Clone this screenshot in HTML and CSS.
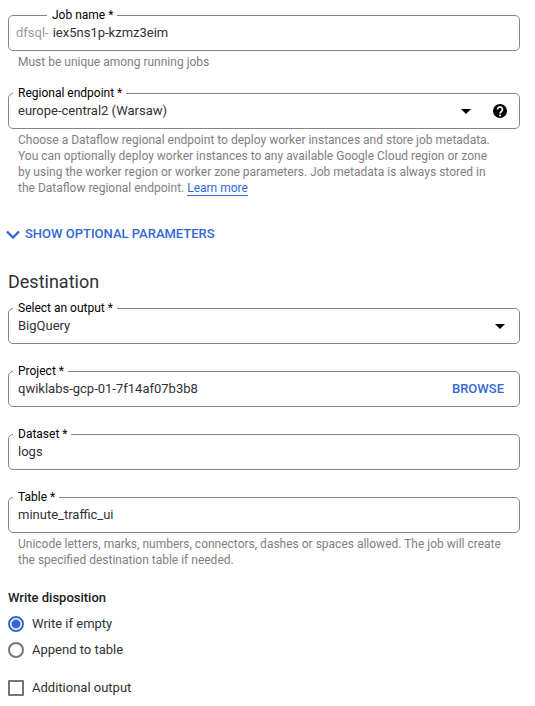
FILE: index.html
```html
<!DOCTYPE html>
<html lang="en">
<head>
<meta charset="utf-8">
<title>Create Dataflow job</title>
<link rel="stylesheet" href="styles.css">
</head>
<body>
<form class="form">
  <div class="field">
    <label class="label label-prefixed" for="job">Job name *</label>
    <span class="prefix">dfsql-</span>
    <input class="control" id="job" type="text" value="iex5ns1p-kzmz3eim">
  </div>
  <p class="hint">Must be unique among running jobs</p>

  <div class="field field-after-hint">
    <label class="label" for="region">Regional endpoint *</label>
    <select class="control" id="region"><option>europe-central2 (Warsaw)</option></select>
    <svg class="arrow" viewBox="0 0 10 5" aria-hidden="true"><path d="M0 0h10L5 5z"/></svg>
    <button class="help" type="button" aria-label="Help">
      <svg viewBox="0 0 24 24" aria-hidden="true"><path d="M12 0a12 12 0 1 0 0 24 12 12 0 0 0 0-24z"/><path class="mark" d="M7.8 9.4a4.2 4.2 0 1 1 6.8 3.2c-1.5 1.1-2.5 1.7-2.5 3.6M12.100 18v2.800"/></svg>
    </button>
  </div>
  <p class="hint">Choose a Dataflow regional endpoint to deploy worker instances and store job metadata.<br>You can optionally deploy worker instances to any available Google Cloud region or zone<br>by using the worker region or worker zone parameters. Job metadata is always stored in<br>the Dataflow regional endpoint. <a class="link" href="#">Learn more</a></p>

  <button class="expand" type="button">
    <svg class="chevron" viewBox="0 0 14 9" aria-hidden="true"><path d="M1 1.500l6 6 6-6"/></svg>
    SHOW OPTIONAL PARAMETERS
  </button>

  <h2 class="heading">Destination</h2>
  <div class="field">
    <label class="label" for="output">Select an output *</label>
    <select class="control" id="output"><option>BigQuery</option></select>
    <svg class="arrow" viewBox="0 0 10 5" aria-hidden="true"><path d="M0 0h10L5 5z"/></svg>
  </div>
  <div class="field field-next">
    <label class="label" for="project">Project *</label>
    <input class="control" id="project" type="text" value="qwiklabs-gcp-01-7f14af07b3b8">
    <button class="browse" type="button">BROWSE</button>
  </div>
  <div class="field field-next">
    <label class="label" for="dataset">Dataset *</label>
    <input class="control" id="dataset" type="text" value="logs">
  </div>
  <div class="field field-next">
    <label class="label" for="table">Table *</label>
    <input class="control" id="table" type="text" value="minute_traffic_ui">
  </div>
  <p class="hint">Unicode letters, marks, numbers, connectors, dashes or spaces allowed. The job will create<br>the specified destination table if needed.</p>

  <fieldset class="group">
    <legend class="legend">Write disposition</legend>
    <label class="option"><input class="radio" type="radio" name="write" checked>Write if empty</label>
    <label class="option"><input class="radio" type="radio" name="write">Append to table</label>
  </fieldset>
  <label class="option option-extra"><input class="check" type="checkbox">Additional output</label>
</form>
</body>
</html>
```
FILE: styles.css
```css
* { box-sizing: border-box; }
body {
  margin: 0;
  background: #fff;
  color: #303134;
  font: 13px/20px Roboto, sans-serif;
}
.form { padding: 15px 15px 0 8px; }
button {
  border: 0;
  padding: 0;
  background: none;
  font: inherit;
  cursor: pointer;
}
.field {
  position: relative;
  display: flex;
  align-items: center;
  min-height: 36px;
  padding: 0 15px 0 9px;
  border: 1px solid #80868b;
  border-radius: 5px;
}
.field-after-hint { margin-top: 24px; }
.field-next { margin-top: 27px; }
.label {
  position: absolute;
  top: -9px;
  left: 4px;
  padding: 0 4px 0 5px;
  background: #fff;
  color: #000;
  font-size: 12px;
  line-height: 16px;
}
.label-prefixed { left: 38px; }
.prefix { margin-left: -2px; margin-right: 4px; color: #9a9a9a; }
.control {
  flex: 1;
  min-width: 0;
  padding: 0;
  border: 0;
  outline: 0;
  appearance: none;
  background: transparent;
  color: inherit;
  font: inherit;
}
.arrow { width: 10px; height: 5px; margin-right: -1px; fill: #000; }
.help { display: flex; margin-left: 23px; margin-right: -3px; }
.help svg { width: 14px; height: 14px; }
.mark { fill: none; stroke: #fff; stroke-width: 3; }
.hint {
  margin: 3px 0 0;
  padding-left: 10px;
  color: #80807f;
  font-size: 12px;
  line-height: 16px;
}
.hint + .field-after-hint { margin-top: 23px; }
.link {
  color: #3367d6;
  text-decoration: none;
  border-bottom: 1px solid #3367d6;
}
.browse, .expand { color: #3367d6; font-weight: 500; }
.expand {
  display: flex;
  align-items: center;
  gap: 5px;
  margin: 28px 0 0 -2px;
}
.chevron { width: 14px; height: 9px; fill: none; stroke: #3367d6; stroke-width: 2.400; }
.heading {
  margin: 26px 0 14px;
  font-size: 18px;
  line-height: 24px;
  font-weight: 400;
}
.group { margin: 20px 0 0; padding: 0; border: 0; }
.legend { padding: 0; margin-bottom: 6px; color: #202124; font-weight: 500; }
.option { display: flex; align-items: center; gap: 8px; margin-bottom: 6px; }
.option-extra { margin-top: 12px; }
.radio, .check {
  appearance: none;
  width: 16px;
  height: 16px;
  margin: 0;
  border: 2px solid #757575;
  background: #fff;
}
.radio { border-radius: 50%; }
.check { border-radius: 1px; }
.radio:checked {
  border-color: #3367d6;
  background: radial-gradient(circle, #3367d6 4px, #fff 5px);
}
```
